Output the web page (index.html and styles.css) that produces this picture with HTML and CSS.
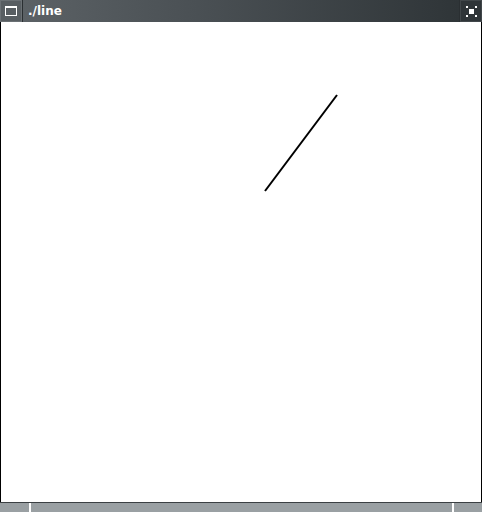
FILE: index.html
```html
<!DOCTYPE html>
<html>
<head>
<meta charset="utf-8">
<link rel="stylesheet" href="styles.css">
</head>
<body>
<div class="window">
  <div class="titlebar">
    <div class="btn btn-menu">
      <svg width="12" height="10" viewBox="0 0 12 10" shape-rendering="crispEdges"><rect x="0.5" y="0.5" width="11" height="9" fill="none" stroke="#fff" stroke-width="1"/><rect x="0" y="0" width="12" height="2" fill="#fff"/></svg>
    </div>
    <div class="title">./line</div>
    <div class="btn btn-max">
      <svg width="11" height="11" viewBox="0 0 11 11" shape-rendering="crispEdges"><rect x="0" y="0" width="2" height="2" fill="#fff"/><rect x="9" y="0" width="2" height="2" fill="#fff"/><rect x="0" y="9" width="2" height="2" fill="#fff"/><rect x="9" y="9" width="2" height="2" fill="#fff"/><rect x="3" y="3" width="5" height="5" fill="#fff"/></svg>
    </div>
  </div>
  <div class="canvas">
    <svg class="drawing" width="480" height="480" viewBox="0 0 480 480">
      <line x1="264" y1="169" x2="336" y2="73" stroke="#000" stroke-width="2"/>
    </svg>
  </div>
  <div class="statusbar">
    <div class="seg seg-left"></div>
    <div class="seg seg-mid"></div>
    <div class="seg seg-right"></div>
  </div>
</div>
</body>
</html>
```
FILE: styles.css
```css
html, body { margin: 0; padding: 0; background: #fff; }
.window { width: 482px; height: 512px; display: flex; flex-direction: column; overflow: hidden; }
.titlebar { height: 22px; display: flex; gap: 1px; background: #2a2f32; }
.btn { width: 22px; height: 22px; display: flex; align-items: center; justify-content: center; box-sizing: border-box; }
.btn-menu { background: #585e62; border: 1px solid #6a7074; }
.btn-max { background: #2f3538; border: 1px solid #41474a; }
.title { flex: 1; background: linear-gradient(to right, #5b6165, #4a5054 40%, #2f3538); color: #fff; font-family: "DejaVu Sans", sans-serif; font-weight: bold; font-size: 12px; line-height: 23px; padding-left: 5px; }
.canvas { flex: 1; border-left: 1px solid #000; border-right: 1px solid #000; background: #fff; position: relative; }
.drawing { display: block; }
.statusbar { height: 9px; border-top: 1px solid #3b4043; display: flex; gap: 2px; background: #fff; }
.seg { background: #9aa0a3; height: 9px; }
.seg-left { width: 29px; }
.seg-mid { flex: 1; }
.seg-right { width: 28px; }
```
